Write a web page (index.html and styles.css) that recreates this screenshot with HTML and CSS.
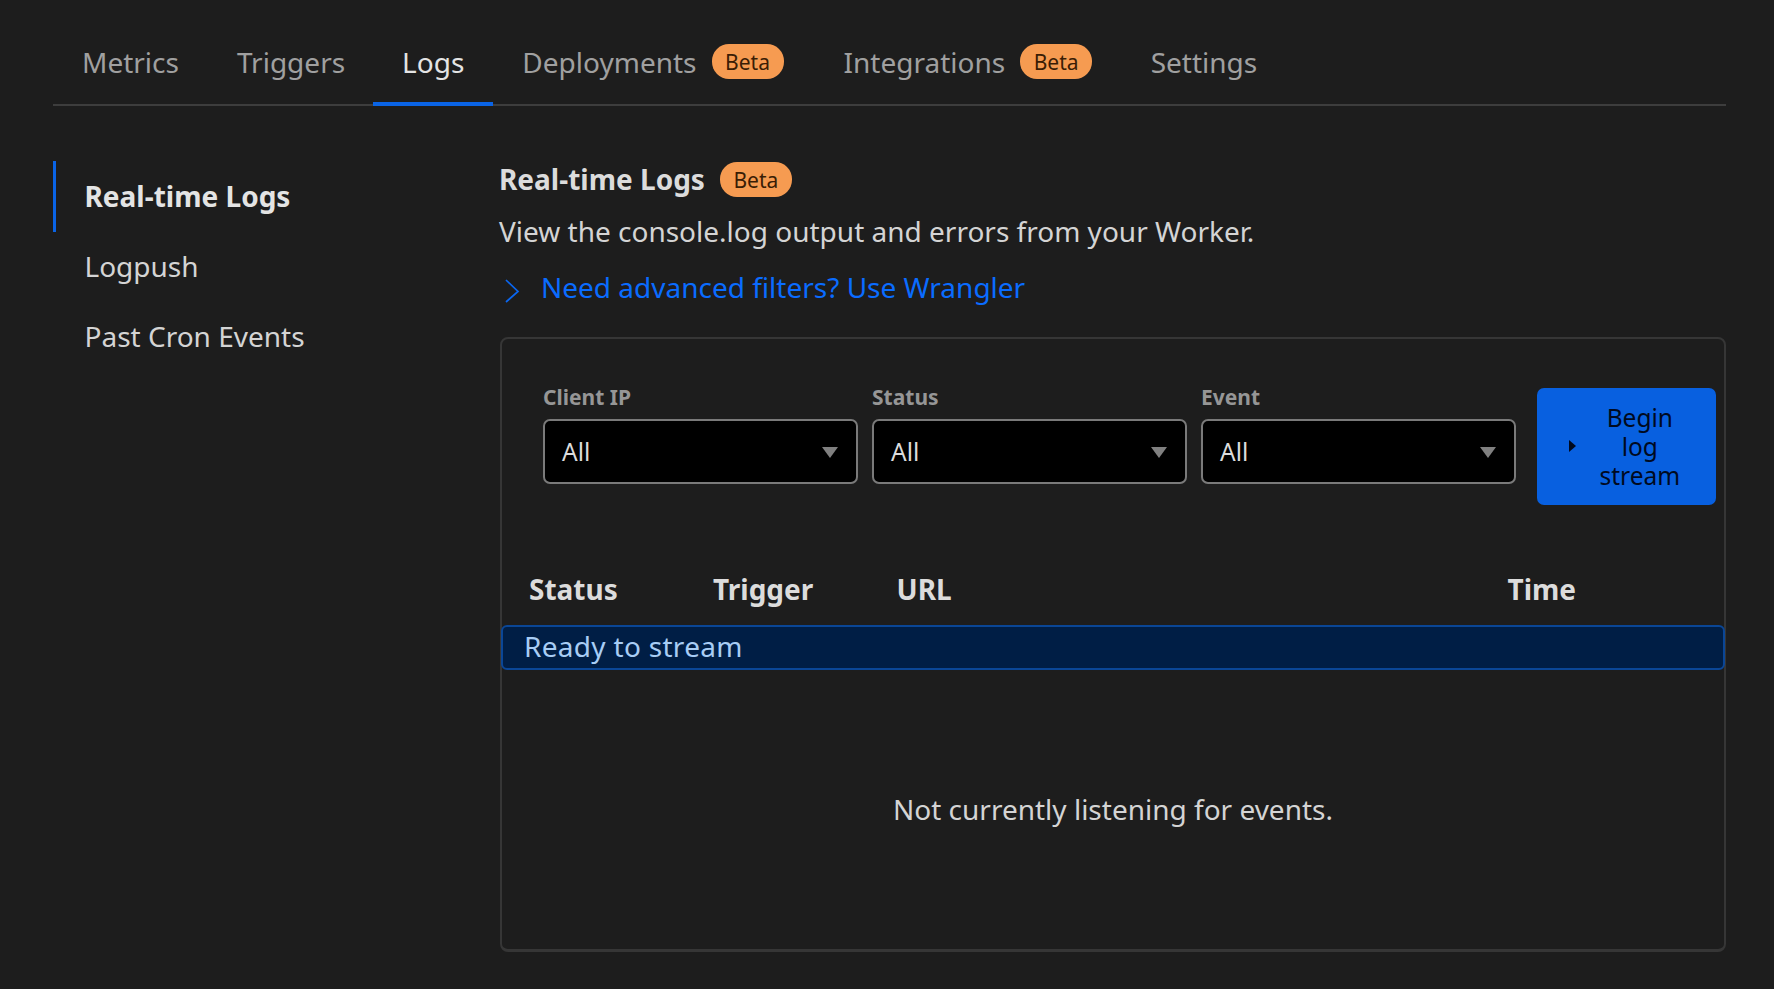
FILE: index.html
```html
<!DOCTYPE html>
<html lang="en">

<head>
    <meta charset="UTF-8">
    <title>Worker Logs</title>
    <link rel="stylesheet" href="styles.css">
</head>

<body>
    <nav class="tabs">
        <a class="tab">Metrics</a>
        <a class="tab">Triggers</a>
        <a class="tab active">Logs</a>
        <a class="tab">Deployments<span class="badge">Beta</span></a>
        <a class="tab">Integrations<span class="badge">Beta</span></a>
        <a class="tab">Settings</a>
    </nav>

    <div class="content">
        <aside class="sidebar">
            <a class="side-item active">Real-time Logs</a>
            <a class="side-item">Logpush</a>
            <a class="side-item">Past Cron Events</a>
        </aside>

        <main class="main">
            <h2 class="title">Real-time Logs<span class="badge">Beta</span></h2>
            <p class="description">View the console.log output and errors from your Worker.</p>
            <a class="advanced">
                <svg class="chevron" width="16" height="24" viewBox="0 0 16 24" fill="none" stroke="#0a66f0" stroke-width="1.7">
                    <path d="M2 1l12 11.5L2 23"></path>
                </svg>
                Need advanced filters? Use Wrangler
            </a>

            <section class="panel">
                <div class="filters">
                    <div class="filter">
                        <label class="filter-label">Client IP</label>
                        <div class="select">All<span class="arrow"></span></div>
                    </div>
                    <div class="filter">
                        <label class="filter-label">Status</label>
                        <div class="select">All<span class="arrow"></span></div>
                    </div>
                    <div class="filter">
                        <label class="filter-label">Event</label>
                        <div class="select">All<span class="arrow"></span></div>
                    </div>
                    <button class="stream-button">
                        <span class="caret"></span>
                        <span class="stream-text">Begin log stream</span>
                    </button>
                </div>

                <div class="table-head">
                    <div>Status</div>
                    <div>Trigger</div>
                    <div>URL</div>
                    <div>Time</div>
                </div>
                <div class="ready">Ready to stream</div>
                <p class="empty">Not currently listening for events.</p>
            </section>
        </main>
    </div>
</body>

</html>
```

FILE: styles.css
```css
body {
    margin: 0;
    padding: 0 48px 0 53px;
    height: 989px;
    box-sizing: border-box;
    overflow: hidden;
    background-color: #1d1d1d;
    font-family: "Noto Sans", sans-serif;
    font-size: 28px;
    color: #d4d4d4;
}

.tabs {
    display: flex;
    height: 106px;
    box-sizing: border-box;
    border-bottom: 2px solid #3d3d3d;
}

.tab {
    display: flex;
    align-items: center;
    height: 106px;
    padding: 22px 29px 5px;
    box-sizing: border-box;
    color: #a0a0a0;
}

.tab:nth-child(2) {
    padding-right: 28px;
}

.tab:nth-child(4) {
    padding-right: 31px;
}

.tab:nth-child(5) {
    padding-right: 29.5px;
}

.tab.active {
    color: #e4e4e4;
    border-bottom: 4px solid #0a64e6;
    padding-bottom: 1px;
}

.badge {
    display: inline-block;
    width: 72px;
    height: 35px;
    margin-left: 15px;
    border-radius: 17px;
    background-color: #f69b51;
    color: #3a1d05;
    font-size: 21px;
    font-weight: 400;
    line-height: 37px;
    text-align: center;
}

.content {
    display: flex;
    margin-top: 55px;
}

.sidebar {
    width: 446px;
    flex-shrink: 0;
}

.side-item {
    display: block;
    height: 70px;
    padding-left: 28.5px;
    border-left: 3px solid transparent;
    line-height: 70px;
}

.side-item.active {
    height: 71px;
    margin-bottom: -1px;
    border-left-color: #0a64e6;
    color: #e4e4e4;
    font-weight: 700;
}

.main {
    flex: 1;
}

.title {
    display: flex;
    align-items: center;
    height: 38px;
    margin: -1px 0 1px;
    font-size: 28px;
    font-weight: 700;
    color: #dcdcdc;
}

.description {
    height: 38px;
    margin: 14px 0 0;
    line-height: 38px;
}

.advanced {
    display: flex;
    align-items: center;
    height: 38px;
    margin-top: 18px;
    color: #0a6cff;
}

.chevron {
    margin: 8px 21px 0 5px;
}

.panel {
    height: 615px;
    margin-top: 31px;
    margin-left: 1px;
    box-sizing: border-box;
    border: 2px solid #363636;
    border-bottom-width: 3px;
    border-radius: 8px;
}

.filters {
    display: flex;
    align-items: flex-start;
    padding: 49px 8px 0 41px;
}

.filter {
    width: 314.5px;
    margin-right: 14.5px;
}

.filter-label {
    display: block;
    height: 31px;
    font-size: 21px;
    font-weight: 700;
    line-height: 18px;
    color: #969696;
}

.select {
    display: flex;
    align-items: center;
    justify-content: space-between;
    height: 65px;
    padding: 0 18px 0 17px;
    box-sizing: border-box;
    border: 2px solid #7a7a7a;
    border-radius: 7px;
    background-color: #000;
    font-size: 24.5px;
    color: #dcdcdc;
}

.arrow {
    width: 0;
    height: 0;
    border-left: 8.5px solid transparent;
    border-right: 8.5px solid transparent;
    border-top: 11px solid #808080;
    margin-top: 2px;
}

.stream-button {
    display: flex;
    align-items: center;
    width: 179px;
    height: 117px;
    margin-left: 6.5px;
    padding: 0 0 0 32px;
    border: none;
    border-radius: 7px;
    background-color: #0860e0;
    color: #000a1f;
    font-family: inherit;
    font-size: 24.5px;
    line-height: 29.3px;
}

.caret {
    flex-shrink: 0;
    width: 0;
    height: 0;
    margin-top: -2px;
    border-top: 6px solid transparent;
    border-bottom: 6px solid transparent;
    border-left: 7px solid #000a1f;
}

.stream-text {
    width: min-content;
    margin-left: 24px;
    text-align: center;
}

.table-head {
    display: grid;
    grid-template-columns: 184px 183.5px 611px 1fr;
    height: 38px;
    margin-top: 65px;
    padding-left: 27px;
    font-weight: 700;
    line-height: 38px;
    color: #dcdcdc;
}

.ready {
    height: 45px;
    margin: 17px -1px 0 -1px;
    padding-left: 21px;
    box-sizing: border-box;
    border: 2px solid #0a4696;
    border-radius: 6px;
    background-color: #001e45;
    color: #a8cdf5;
    letter-spacing: 0.3px;
    line-height: 38px;
}

.empty {
    margin: 120px 0 0;
    line-height: 38px;
    text-align: center;
}
```
